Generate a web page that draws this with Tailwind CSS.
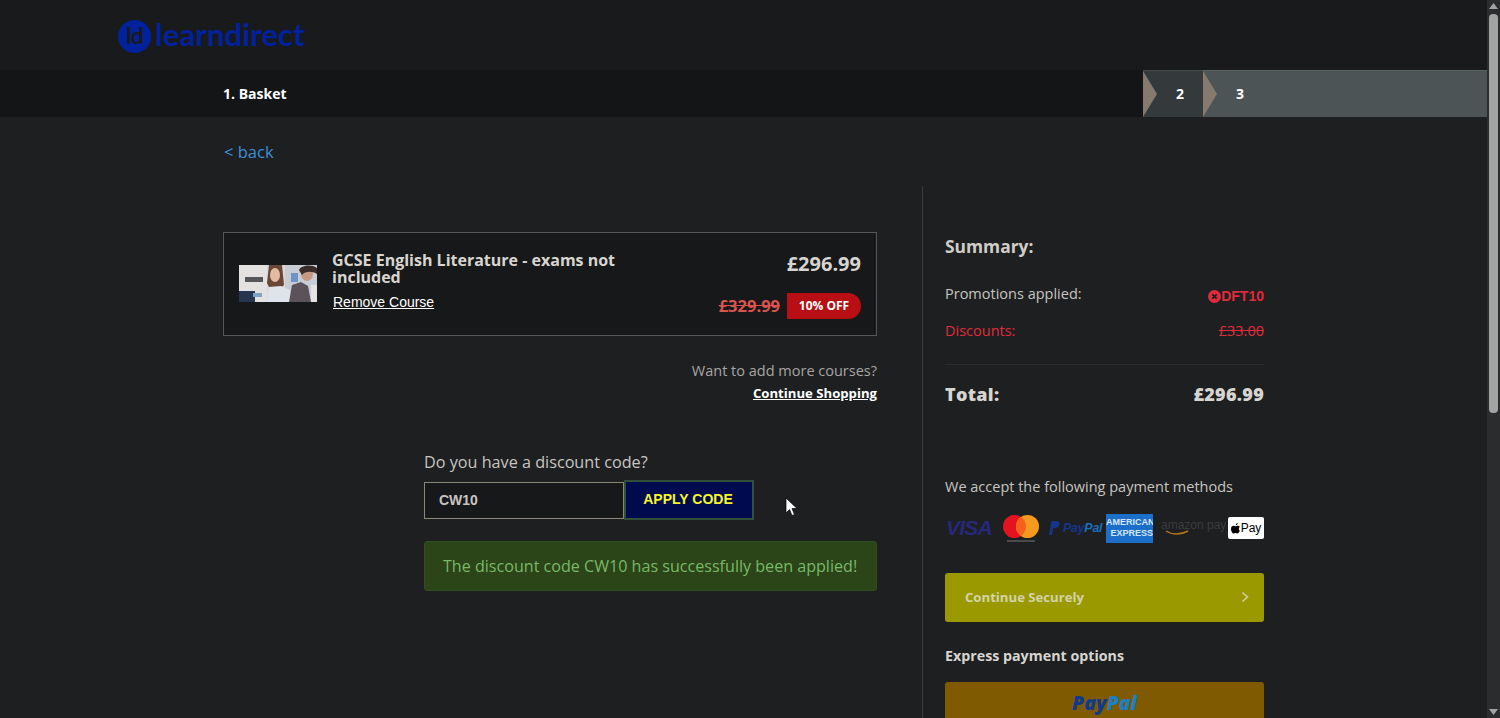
<!DOCTYPE html>
<html lang="en">
<head>
  <meta charset="UTF-8">
  <meta name="viewport" content="width=device-width, initial-scale=1.0">
  <title>learndirect - Basket</title>
  <script src="https://cdn.jsdelivr.net/npm/@tailwindcss/browser@4"></script>
</head>
<body class="h-[718px] overflow-hidden bg-[#1d1f21] font-['Open_Sans',sans-serif] text-[#d8d5d0]">
  <div class="flex h-[718px]">
    <div class="w-[1487px] h-[718px] overflow-hidden shrink-0">

      <!-- logo header -->
      <header class="h-[70px] bg-[#191a1c] flex items-center pl-[118px] pt-[2px]">
        <div class="w-[33px] h-[33px] rounded-full bg-[#02219c] flex items-center justify-center text-[#191a1c] font-['Lato',sans-serif] font-bold text-[23px] leading-none tracking-[-1px] pb-[2px]">ld</div>
        <span class="ml-[4px] font-['Lato',sans-serif] text-[#02219c] font-bold text-[31px] leading-none tracking-[0.1px] pb-[3px]">learndirect</span>
      </header>

      <!-- checkout steps -->
      <nav class="h-[47px] flex bg-[#141517]">
        <div class="w-[1143px] pl-[223px] pb-[1px] flex items-center text-[14px] font-bold text-white">1. Basket</div>
        <div class="w-[60px] bg-[#34393b] flex items-center relative border-t border-[#44494b] pb-[2px]">
          <svg class="absolute left-0 top-0" width="15" height="46" viewBox="0 0 15 46"><polygon points="0,0 14,23 0,46" fill="#857a6d"/></svg>
          <span class="ml-[33px] text-[14px] font-bold text-white">2</span>
        </div>
        <div class="flex-1 bg-[#4d5456] flex items-center relative border-t border-[#5a6163] pb-[2px]">
          <svg class="absolute left-0 top-0" width="15" height="46" viewBox="0 0 15 46"><polygon points="0,0 14,23 0,46" fill="#857a6d"/></svg>
          <span class="ml-[33px] text-[14px] font-bold text-white">3</span>
        </div>
      </nav>

      <div class="pl-[223px] flex">
        <!-- left column -->
        <div class="w-[654px]">
          <a class="block mt-[23px] ml-[1px] text-[16.5px] leading-[23px] text-[#3d8fd8]">&lt; back</a>

          <!-- course card -->
          <div class="mt-[69px] h-[104px] border border-[#55585a] bg-[#17181a] flex pl-[15px] pr-[15px]">
            <svg class="mt-[32px] shrink-0" width="78" height="37" viewBox="0 0 78 37">
              <rect width="78" height="37" fill="#d9d8da"/>
              <rect x="0" y="0" width="28" height="37" fill="#e4e2e0"/>
              <rect x="6" y="12" width="18" height="5" fill="#55565a"/>
              <rect x="0" y="26" width="16" height="11" fill="#26364f"/>
              <rect x="14" y="28" width="9" height="4" fill="#7fa3c4"/>
              <rect x="46" y="0" width="32" height="37" fill="#c8ccd4"/>
              <rect x="52" y="8" width="7" height="9" fill="#6f93c4"/>
              <path d="M30 0h13l2 20-4 4h-10l-3-6z" fill="#6b4636"/>
              <ellipse cx="36" cy="10" rx="5" ry="7" fill="#e2bba4"/>
              <path d="M28 37l2-15 12-1 9 4 2 12z" fill="#dfe3ea"/>
              <path d="M50 37l3-17 9-3 7 4 3 16z" fill="#5c5259"/>
              <ellipse cx="68" cy="9" rx="6" ry="7" fill="#c49a84"/>
              <path d="M60 5c2-5 13-6 18-2v6c-5-3-12-3-15 1z" fill="#3a2c28"/>
              <path d="M72 20h6v17h-6z" fill="#e6e2e0"/>
            </svg>
            <div class="ml-[15px] w-[300px]">
              <h3 class="mt-[19px] text-[16px] leading-[17px] font-bold text-[#d8d5d0]">GCSE English Literature - exams not included</h3>
              <a class="block mt-[8px] ml-[1px] font-['Liberation_Sans',sans-serif] text-[14px] leading-[17px] text-white underline">Remove Course</a>
            </div>
            <div class="flex-1 flex flex-col items-end">
              <div class="mt-[17px] text-[20px] leading-[27px] font-bold text-[#d8d5d0]">£296.99</div>
              <div class="mt-[16px] flex items-center">
                <span class="text-[16.5px] font-bold text-[#d9534f] line-through mr-[7px]">£329.99</span>
                <span class="w-[74px] h-[26px] bg-[#b80f14] rounded-r-[13px] flex items-center justify-center text-[12px] font-bold text-white">10% OFF</span>
              </div>
            </div>
          </div>

          <div class="mt-[25px] text-right text-[14.5px] leading-[20px] text-[#a8a6a2]">Want to add more courses?</div>
          <div class="mt-[2px] text-right text-[13.15px] leading-[20px] font-bold text-white underline">Continue Shopping</div>

          <!-- discount code -->
          <div class="ml-[201px] mt-[48px]">
            <div class="text-[16.2px] leading-[22px] text-[#c8c5c0]">Do you have a discount code?</div>
            <div class="mt-[7px] flex items-center">
              <div class="w-[200px] h-[37px] border border-[#8a8678] bg-[#17181a] flex items-center pl-[14px] font-['Liberation_Sans',sans-serif] font-bold text-[14px] text-[#c8c5c0]">CW10</div>
              <button class="w-[130px] h-[40px] pb-[1px] pr-[2px] bg-[#000b4f] border-2 border-[#31503a] font-['Liberation_Sans',sans-serif] font-bold text-[14px] text-[#f5f52a]">APPLY CODE</button>
            </div>
            <div class="mt-[21px] h-[50px] border border-[#2e4f1e] bg-[#2b4418] rounded-[3px] pl-[18px] flex items-center text-[16.1px] text-[#78b868] whitespace-nowrap">The discount code CW10 has successfully been applied!</div>
          </div>
        </div>

        <!-- summary column -->
        <aside class="ml-[45px] mt-[69px] border-l border-[#3a3c3e] pl-[22px] w-[342px] h-[600px]">
          <h3 class="mt-[49px] text-[17.4px] leading-[23px] font-bold text-[#d0cdc8]">Summary:</h3>
          <div class="mt-[26px] flex justify-between items-start">
            <span class="text-[14.5px] leading-[20px] text-[#c8c5c0]">Promotions applied:</span>
            <span class="mt-[4px] flex items-center font-['Liberation_Sans',sans-serif] font-bold text-[14px] leading-[16px] text-[#e02b3c]">
              <svg width="13" height="13" viewBox="0 0 13 13"><circle cx="6.5" cy="6.5" r="6.5" fill="#e02b3c"/><path d="M4.3 4.3l4.4 4.4M8.7 4.3l-4.4 4.4" stroke="#1d1f21" stroke-width="1.8"/></svg>DFT10
            </span>
          </div>
          <div class="mt-[17px] flex justify-between text-[14.5px] leading-[20px] text-[#e02b3c]">
            <span>Discounts:</span>
            <span class="line-through">£33.00</span>
          </div>
          <div class="mt-[23px] border-t border-[#2a2c2e]"></div>
          <div class="mt-[17px] flex justify-between text-[18px] leading-[24px] font-extrabold tracking-[0.3px] text-[#d8d5d0]">
            <span>Total:</span>
            <span>£296.99</span>
          </div>

          <div class="mt-[71px] text-[14.5px] leading-[20px] text-[#c8c5c0]">We accept the following payment methods</div>

          <!-- payment logos -->
          <div class="mt-[16px] h-[30px] flex items-center">
            <span class="ml-[1px] w-[57px] font-['Liberation_Sans',sans-serif] font-bold italic text-[21px] tracking-[-0.8px] text-[#27287a]">VISA</span>
            <div class="w-[46px] flex flex-col items-start">
              <svg width="36" height="23" viewBox="0 0 36 23"><circle cx="11.5" cy="11.5" r="11.5" fill="#e3141f"/><circle cx="24.5" cy="11.5" r="11.5" fill="#f59a1f"/><path d="M18 2a11.5 11.5 0 0 1 0 19a11.5 11.5 0 0 1 0-19z" fill="#f5601b"/></svg>
              <span class="block w-[28px] ml-[4px] mt-[2px] h-[2px] bg-[#4a4b4e]"></span>
            </div>
            <div class="w-[57px] flex items-center">
              <svg width="11" height="14" viewBox="0 0 11 14"><path d="M2.5 0h5c2.5 0 3.5 1.500 3 3.500-.6 2.500-2.500 3.500-4.500 3.500h-2l-1 7H0z" fill="#15358a"/></svg>
              <span class="ml-[3px] font-['Liberation_Sans',sans-serif] font-bold italic text-[12.5px] tracking-[-0.3px] text-[#15358a]">Pay<span class="text-[#1c6fb8]">Pal</span></span>
            </div>
            <div class="w-[47px] h-[29px] shrink-0 bg-[#1b6fc9] flex flex-col justify-center font-['Liberation_Sans',sans-serif] font-bold text-[9px] leading-[11px] text-[#d7e6f6] overflow-hidden">
              <span class="whitespace-nowrap">AMERICAN</span>
              <span class="self-end whitespace-nowrap">EXPRESS</span>
            </div>
            <div class="relative ml-[8px] h-[20px] w-[67px] shrink-0">
              <span class="absolute left-0 -top-[1px] font-['Liberation_Sans',sans-serif] text-[12px] leading-[16px] text-[#3b3c3e] whitespace-nowrap">amazon pay</span>
              <svg class="absolute left-[4px] top-[12px]" width="24" height="6" viewBox="0 0 24 6"><path d="M1 1c6 4 15 4 22 0" fill="none" stroke="#b5761a" stroke-width="1.500"/></svg>
            </div>
            <div class="w-[36px] h-[22px] shrink-0 bg-white rounded-[2px] flex items-center justify-center font-['Liberation_Sans',sans-serif] text-[12px] text-black">
              <svg width="9" height="11" viewBox="0 0 9 11"><path d="M6.700 0c.1 1-.7 2.200-1.900 2.200C4.700 1.100 5.600.1 6.700 0zM8.800 7.700c-.5 1.200-1.300 2.800-2.300 2.800-.8 0-1-.5-1.900-.5s-1.200.5-1.900.5C1.500 10.500 0 8 0 5.900 0 3.900 1.300 2.800 2.600 2.800c.8 0 1.500.5 2 .5s1.200-.6 2.200-.6c.4 0 1.500.1 2.100 1.100-1.500 1-1.300 3.200-.1 3.900z" fill="#000"/></svg>
              <span class="ml-[1px]">Pay</span>
            </div>
          </div>

          <button class="mt-[30px] w-full h-[49px] bg-[#9a9a00] rounded-[3px] pl-[20px] pr-[14px] pt-[1px] flex items-center justify-between text-[13.15px] font-bold text-[#d4d2a8]">
            <span>Continue Securely</span>
            <svg width="10" height="12" viewBox="0 0 10 12" class="mb-[2px]"><path d="M2.500 1.500l5 4.500-5 4.500" fill="none" stroke="#d4d2a8" stroke-width="1.500"/></svg>
          </button>

          <div class="mt-[24px] text-[14.25px] leading-[20px] font-bold text-[#d8d5d0]">Express payment options</div>

          <button class="mt-[16px] w-full h-[49px] pb-[8px] bg-[#7f5a00] rounded-[3px] flex items-center justify-center font-['Open_Sans',sans-serif] font-extrabold italic text-[19.5px] text-[#123a8c]">Pay<span class="text-[#1a7fc4]">Pal</span></button>
        </aside>
      </div>
    </div>

    <!-- scrollbar -->
    <div class="w-[13px] h-[718px] bg-[#2b2c2e] flex flex-col items-center relative">
      <svg class="mt-[3px]" width="9" height="6" viewBox="0 0 9 6"><polygon points="4.500,0 9,6 0,6" fill="#a3a3a3"/></svg>
      <div class="mt-[5px] w-[9px] h-[399px] bg-[#a3a3a3] rounded-[4px]"></div>
      <svg class="absolute bottom-[3px] left-[2px]" width="9" height="6" viewBox="0 0 9 6"><polygon points="0,0 9,0 4.500,6" fill="#a3a3a3"/></svg>
    </div>
  </div>

  <!-- mouse pointer -->
  <svg class="absolute left-[785px] top-[497px]" width="13" height="20" viewBox="0 0 13 20"><path d="M1 1v15l3.500-3.500 2.500 6 2.500-1-2.500-6h5z" fill="#fff" stroke="#000" stroke-width="0.700"/></svg>
</body>
</html>
